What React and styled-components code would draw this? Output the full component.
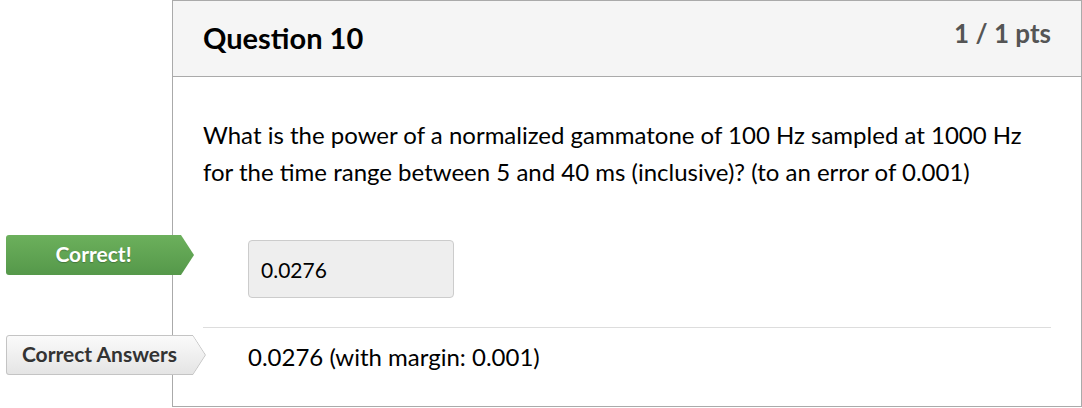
import React from 'react';
import styled, { createGlobalStyle } from 'styled-components';

const GlobalStyle = createGlobalStyle`
  html, body {
    margin: 0;
    padding: 0;
    background: #ffffff;
  }
  body {
    font-family: 'Lato', 'Liberation Sans', sans-serif;
    color: #2d3b45;
  }
`;

// Question card with header + body
const Card = styled.div`
  margin-left: 172px;
  width: 910px;
  height: 407px;
  box-sizing: border-box;
  border: 1px solid #aaaaaa;
  position: relative;
  background: #ffffff;
`;

const Header = styled.div`
  height: 76px;
  box-sizing: border-box;
  background: #f5f5f5;
  border-bottom: 1px solid #aaaaaa;
  padding: 0 30px;
  display: flex;
  justify-content: space-between;
  align-items: flex-start;
`;

const Title = styled.h2`
  margin: 0;
  padding-top: 20px;
  font-size: 29px;
  font-weight: 700;
  color: #000000;
  line-height: 34px;
`;

const Points = styled.div`
  padding-top: 17px;
  font-size: 26px;
  font-weight: 700;
  color: #555555;
  line-height: 30px;
`;

const Body = styled.div`
  padding: 0 30px;
`;

const QuestionText = styled.p`
  margin: 0;
  padding-top: 39px;
  font-size: 24px;
  line-height: 37px;
  color: #000000;
`;

const AnswerRow = styled.div`
  position: relative;
  display: flex;
  align-items: flex-start;
  box-sizing: border-box;
  padding-left: 45px;
  padding-top: ${(p) => p.$top}px;
  height: ${(p) => p.$height}px;
`;

const AnswerBox = styled.div`
  width: 206px;
  height: 58px;
  box-sizing: border-box;
  background: #eeeeee;
  border: 1px solid #cccccc;
  border-radius: 4px;
  padding-left: 12px;
  display: flex;
  align-items: center;
  font-size: 21px;
  color: #000000;
`;

const AnswerText = styled.div`
  height: 40px;
  display: flex;
  align-items: center;
  font-size: 24px;
  color: #000000;
`;

const Divider = styled.hr`
  margin: 0;
  border: none;
  border-top: 1px solid #dddddd;
`;

// arrow-shaped flag sitting over the card's left edge
const Flag = styled.div`
  position: absolute;
  left: -197px;
  top: ${(p) => p.$top}px;
  height: ${(p) => p.$h}px;
  width: ${(p) => p.$w}px;
  box-sizing: border-box;
  display: flex;
  align-items: center;
  justify-content: center;
  padding: 0 13px 3px 0;
  font-size: 21px;
  font-weight: 700;
  color: ${(p) => (p.$green ? '#ffffff' : '#333333')};
  background: ${(p) =>
    p.$green
      ? 'linear-gradient(#6cb05c, #55984a)'
      : 'linear-gradient(#fbfbfb, #e4e4e4)'};
  clip-path: polygon(0 0, calc(100% - 13px) 0, 100% 50%, calc(100% - 13px) 100%, 0 100%);
  border-radius: 3px 0 0 3px;
  text-shadow: ${(p) => (p.$green ? '0 1px 1px rgba(0,0,0,0.25)' : 'none')};
`;

const FlagOutline = styled.svg`
  position: absolute;
  left: 0;
  top: 0;
  pointer-events: none;
`;

const FlagLabel = styled.span`
  position: relative;
`;

function GrayFlag({ w, h, top, children }) {
  return (
    <Flag $w={w} $h={h} $top={top}>
      <FlagOutline width={w} height={h}>
        <path
          d={`M3 0.5 H${w - 13} L${w - 0.5} ${h / 2} L${w - 13} ${h - 0.5} H3 Q0.5 ${h - 0.5} 0.5 ${h - 3} V3 Q0.5 0.5 3 0.5 Z`}
          fill="none"
          stroke="#c4c4c4"
        />
      </FlagOutline>
      <FlagLabel>{children}</FlagLabel>
    </Flag>
  );
}

export default function App() {
  return (
    <>
      <GlobalStyle />
      <Card>
        <Header>
          <Title>Question 10</Title>
          <Points>1 / 1 pts</Points>
        </Header>
        <Body>
          <QuestionText>
            What is the power of a normalized gammatone of 100 Hz sampled at 1000 Hz
            <br />
            for the time range between 5 and 40 ms (inclusive)? (to an error of 0.001)
          </QuestionText>
          <AnswerRow $top={50} $height={137}>
            <Flag $green $w={188} $h={40} $top={45}>
              Correct!
            </Flag>
            <AnswerBox>0.0276</AnswerBox>
          </AnswerRow>
          <Divider />
          <AnswerRow $top={8} $height={48}>
            <GrayFlag w={200} h={40} top={7}>
              Correct Answers
            </GrayFlag>
            <AnswerText>0.0276 (with margin: 0.001)</AnswerText>
          </AnswerRow>
        </Body>
      </Card>
    </>
  );
}
